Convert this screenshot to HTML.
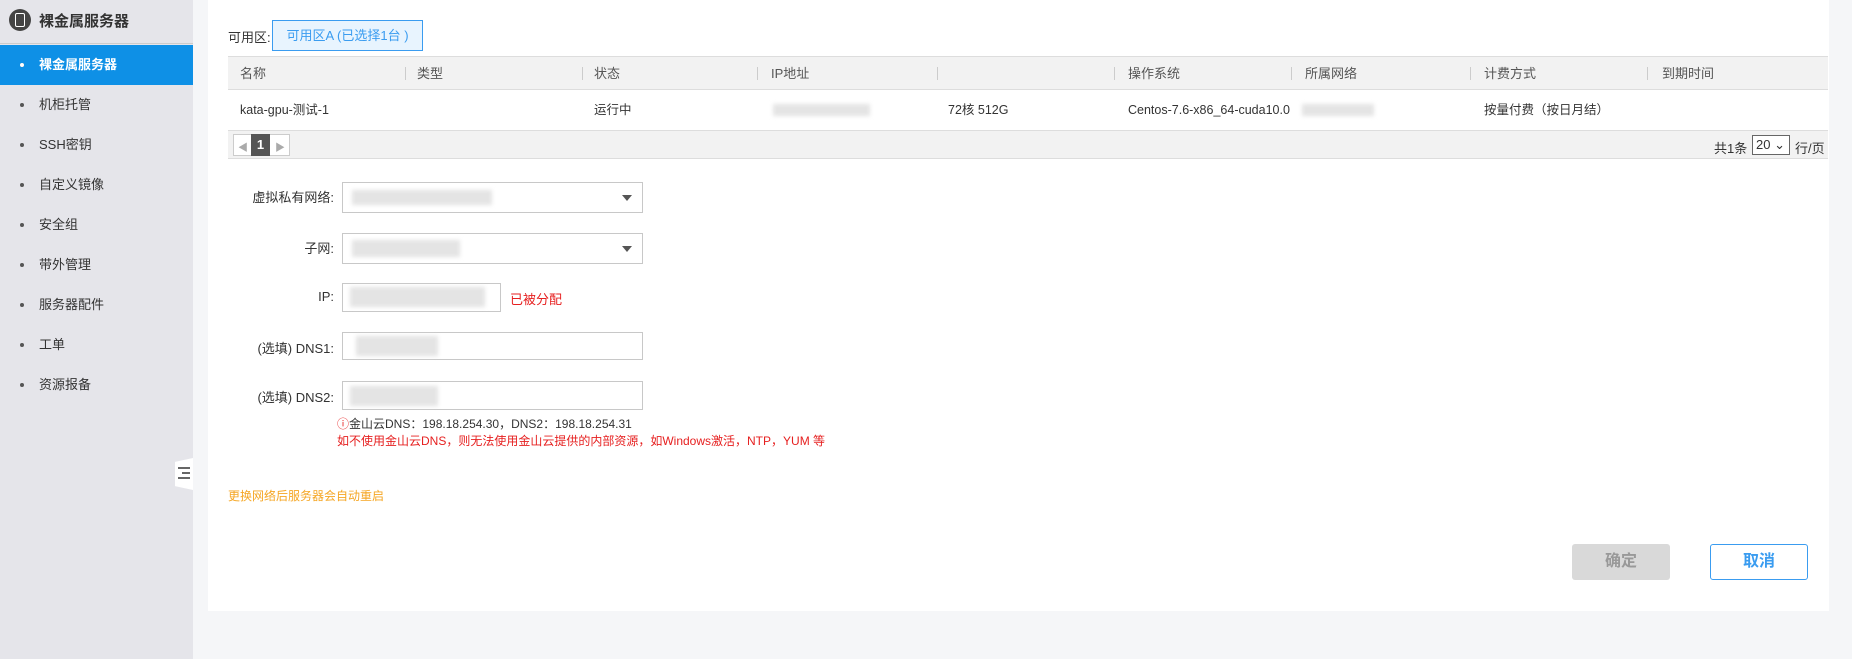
<!DOCTYPE html>
<html><head><meta charset="utf-8"><style>
*{margin:0;padding:0;box-sizing:border-box}
body{width:1852px;height:659px;background:#f5f6f8;font-family:"Liberation Sans","Noto Sans CJK SC",sans-serif;font-size:13px;color:#333;position:relative;overflow:hidden}
.a{position:absolute;white-space:nowrap}
#side{position:absolute;left:0;top:0;width:193px;height:659px;background:#e5e5ea}
.item{position:absolute;left:0;width:193px;height:40px;line-height:40px;padding-left:39px;font-size:13px;color:#333}
.item:before{content:"";position:absolute;left:20px;top:18px;width:4px;height:4px;border-radius:50%;background:#555}
#main{position:absolute;left:208px;top:0;width:1621px;height:611px;background:#fff}
.th{position:absolute;top:57px;height:33px;line-height:33px;color:#555}
.sep{position:absolute;top:67px;width:1px;height:13px;background:#ccc}
.td{position:absolute;top:90px;height:40px;line-height:40px;color:#333;font-size:12.5px}
.blur{position:absolute;background:#e4e4e4;filter:blur(2px)}
.inp{position:absolute;border:1px solid #c8c8c8;background:#fff}
.lbl{position:absolute;width:200px;left:134px;text-align:right;color:#333}
.tri{position:absolute;right:10px;top:12px;width:0;height:0;border-left:5px solid transparent;border-right:5px solid transparent;border-top:6px solid #555}
</style></head><body>
<div id="side">
 <div class="a" style="left:9px;top:9px;width:22px;height:22px;border-radius:50%;background:#444"></div>
 <div class="a" style="left:15px;top:13px;width:10px;height:14px;border:1.5px solid #fff;border-radius:2px"></div>
 <div class="a" style="left:39px;top:10px;font-size:15px;font-weight:bold;color:#333">裸金属服务器</div>
 <div class="a" style="left:0;top:43px;width:193px;height:1px;background:#ccc"></div>
 <div class="item" style="top:45px;background:#0e90e6;color:#fff;font-weight:bold">裸金属服务器</div>
 <div class="a" style="left:20px;top:63px;width:4px;height:4px;border-radius:50%;background:#fff"></div>
 <div class="item" style="top:85px">机柜托管</div>
 <div class="item" style="top:125px">SSH密钥</div>
 <div class="item" style="top:165px">自定义镜像</div>
 <div class="item" style="top:205px">安全组</div>
 <div class="item" style="top:245px">带外管理</div>
 <div class="item" style="top:285px">服务器配件</div>
 <div class="item" style="top:325px">工单</div>
 <div class="item" style="top:365px">资源报备</div>
 <div class="a" style="left:175px;top:458px;width:18px;height:32px;background:#fff;clip-path:polygon(0 12%,100% 0,100% 100%,0 88%)"></div>
 <div class="a" style="left:178px;top:467px;width:12px;height:2px;background:#666"></div>
 <div class="a" style="left:182px;top:472px;width:8px;height:2px;background:#666"></div>
 <div class="a" style="left:178px;top:477px;width:12px;height:2px;background:#666"></div>
</div>
<div id="main"></div>
<div class="a" style="left:228px;top:27px;color:#333">可用区:</div>
<div class="a" style="left:272px;top:20px;width:151px;height:31px;border:1px solid #3a9cf0;background:#e8f4fe;color:#3a9cf0;line-height:29px;text-align:center">可用区A (已选择1台 )</div>
<div class="a" style="left:228px;top:56px;width:1600px;height:34px;background:#f2f2f2;border-top:1px solid #ddd;border-bottom:1px solid #ddd"></div>
<div class="a" style="left:228px;top:130px;width:1600px;height:29px;background:#f2f2f2;border-top:1px solid #ddd;border-bottom:1px solid #ddd"></div>
<div class="th" style="left:240px">名称</div>
<div class="sep" style="left:405px"></div><div class="th" style="left:417px">类型</div>
<div class="sep" style="left:582px"></div><div class="th" style="left:594px">状态</div>
<div class="sep" style="left:757px"></div><div class="th" style="left:771px">IP地址</div>
<div class="sep" style="left:937px"></div>
<div class="sep" style="left:1114px"></div><div class="th" style="left:1128px">操作系统</div>
<div class="sep" style="left:1291px"></div><div class="th" style="left:1305px">所属网络</div>
<div class="sep" style="left:1470px"></div><div class="th" style="left:1484px">计费方式</div>
<div class="sep" style="left:1647px"></div><div class="th" style="left:1662px">到期时间</div>
<div class="td" style="left:240px">kata-gpu-测试-1</div>
<div class="td" style="left:594px">运行中</div>
<div class="blur" style="left:773px;top:104px;width:97px;height:12px"></div>
<div class="td" style="left:948px">72核 512G</div>
<div class="td" style="left:1128px">Centos-7.6-x86_64-cuda10.0</div>
<div class="blur" style="left:1302px;top:104px;width:72px;height:12px"></div>
<div class="td" style="left:1484px">按量付费（按日月结）</div>
<div class="a" style="left:233px;top:134px;width:57px;height:22px;border:1px solid #ccc;background:#fff"></div>
<div class="a" style="left:251px;top:134px;width:19px;height:22px;background:#555;color:#fff;font-weight:bold;text-align:center;line-height:22px">1</div>
<div class="a" style="left:238px;top:139px;color:#aaa;font-size:10px">◀</div>
<div class="a" style="left:275px;top:139px;color:#aaa;font-size:10px">▶</div>
<div class="a" style="left:1714px;top:138px">共1条</div>
<div class="a" style="left:1752px;top:135px;width:38px;height:20px;border:1px solid #666;background:#fff;line-height:18px;padding-left:3px">20 ⌄</div>
<div class="a" style="left:1795px;top:138px">行/页</div>

<div class="lbl" style="top:187px">虚拟私有网络:</div>
<div class="inp" style="left:342px;top:182px;width:301px;height:31px"><div class="tri"></div></div>
<div class="blur" style="left:352px;top:190px;width:140px;height:15px"></div>
<div class="lbl" style="top:238px">子网:</div>
<div class="inp" style="left:342px;top:233px;width:301px;height:31px"><div class="tri"></div></div>
<div class="blur" style="left:352px;top:240px;width:108px;height:17px"></div>
<div class="lbl" style="top:289px">IP:</div>
<div class="inp" style="left:342px;top:283px;width:159px;height:29px"></div>
<div class="blur" style="left:350px;top:287px;width:135px;height:20px"></div>
<div class="a" style="left:510px;top:289px;color:#e62020">已被分配</div>
<div class="lbl" style="top:338px">(选填) DNS1:</div>
<div class="inp" style="left:342px;top:332px;width:301px;height:28px"></div>
<div class="blur" style="left:356px;top:336px;width:82px;height:20px"></div>
<div class="lbl" style="top:387px">(选填) DNS2:</div>
<div class="inp" style="left:342px;top:381px;width:301px;height:29px"></div>
<div class="blur" style="left:350px;top:386px;width:88px;height:20px"></div>
<div class="a" style="left:337px;top:415px;font-size:12px"><span style="color:#e62020">ⓘ</span>金山云DNS：198.18.254.30，DNS2：198.18.254.31</div>
<div class="a" style="left:337px;top:432px;font-size:12px;color:#e62020">如不使用金山云DNS，则无法使用金山云提供的内部资源，如Windows激活，NTP，YUM 等</div>
<div class="a" style="left:228px;top:487px;font-size:12px;color:#f5a623">更换网络后服务器会自动重启</div>
<div class="a" style="left:1572px;top:544px;width:98px;height:36px;border-radius:3px;background:#d9d9d9;color:#999;font-size:16px;font-weight:bold;text-align:center;line-height:36px">确定</div>
<div class="a" style="left:1710px;top:544px;width:98px;height:36px;border-radius:3px;border:1px solid #3a9cf0;background:#fff;color:#3a9cf0;font-size:16px;font-weight:bold;text-align:center;line-height:34px">取消</div>
</body></html>
